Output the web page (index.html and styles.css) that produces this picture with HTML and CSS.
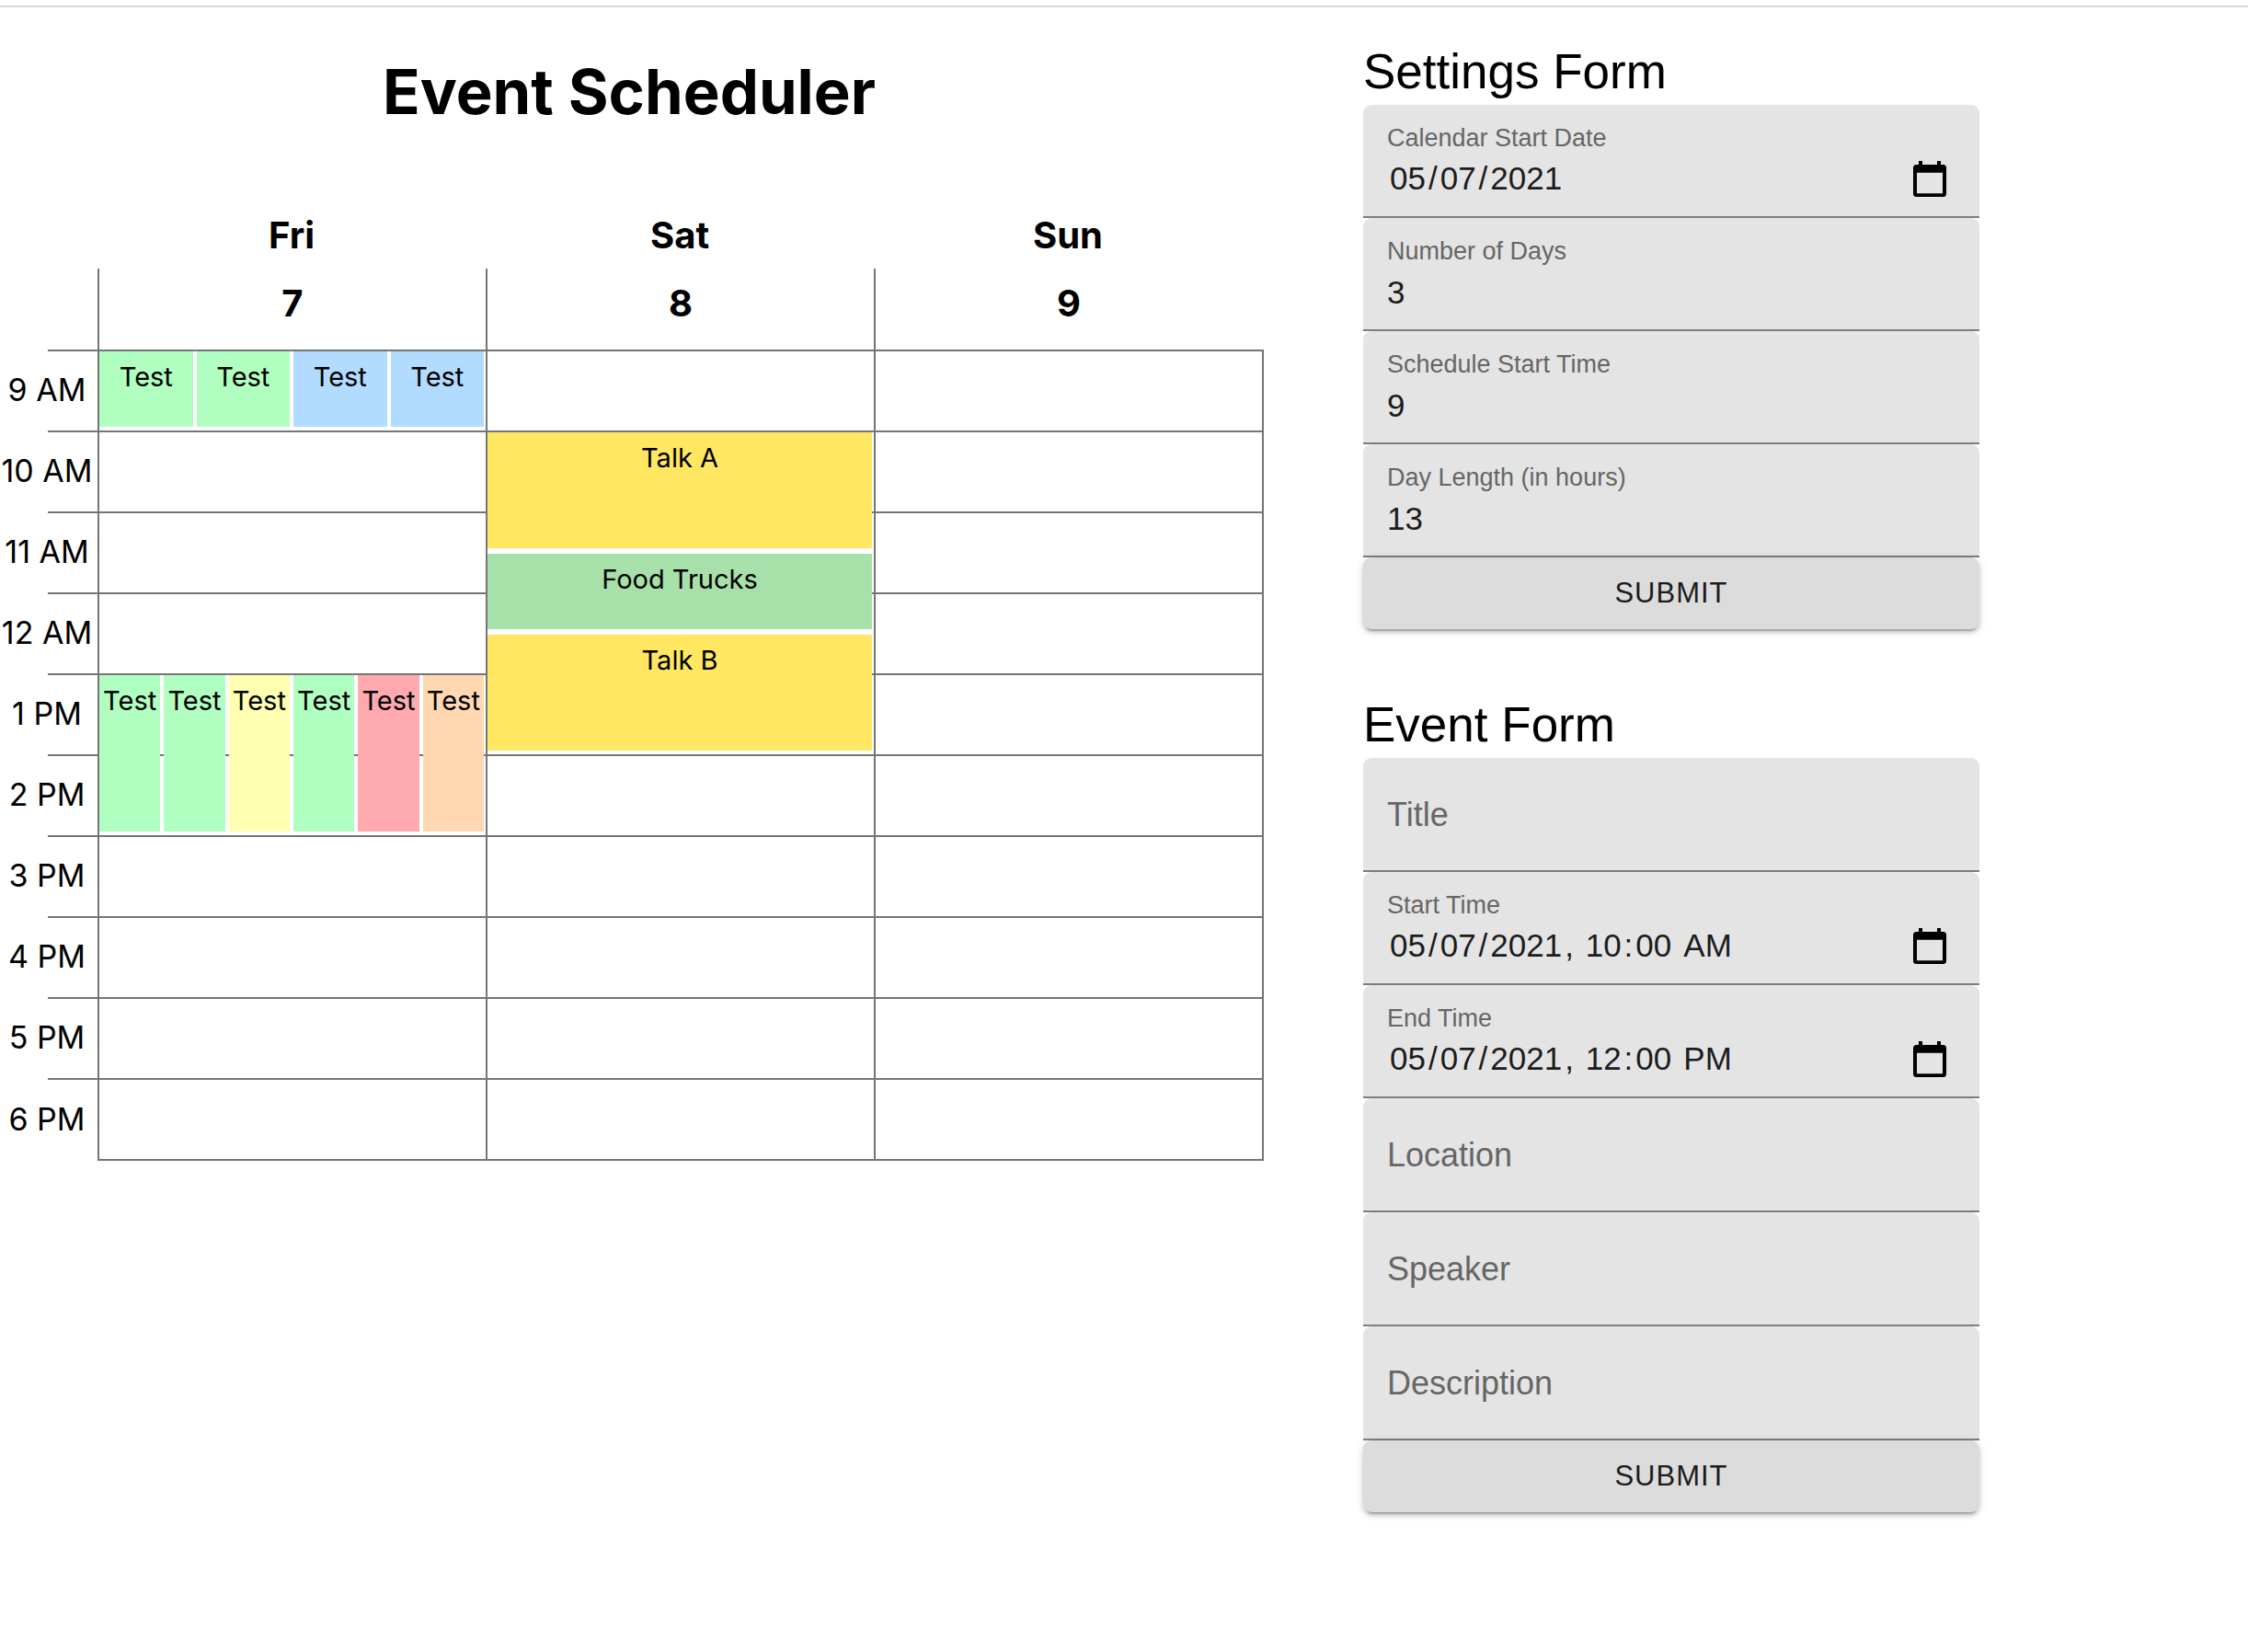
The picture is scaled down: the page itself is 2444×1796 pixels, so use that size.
FILE: index.html
```html
<!DOCTYPE html>
<html lang="en-US">
<head>
<meta charset="utf-8">
<meta name="viewport" content="width=device-width, initial-scale=1">
<title>Event Scheduler</title>
<link rel="stylesheet" href="styles.css">
</head>
<body>
<svg class="sprite" aria-hidden="true">
  <symbol id="calendar-icon" viewBox="0 0 36 39">
    <path fill-rule="evenodd" d="M6 0h4v4h16V0h4v4h2.500a3.500 3.500 0 0 1 3.500 3.500v28a3.500 3.500 0 0 1-3.500 3.500h-29A3.500 3.500 0 0 1 0 35.500v-28A3.500 3.500 0 0 1 3.500 4H6zM4 12.700v22.600h28V12.700z"/>
  </symbol>
</svg>
<main class="page">
  <section class="calendar">
    <h1 class="calendar__title">Event Scheduler</h1>
    <table class="schedule">
      <colgroup><col class="schedule__hours"><col><col><col></colgroup>
      <thead>
        <tr class="weekdays"><td></td><th scope="col">Fri</th><th scope="col">Sat</th><th scope="col">Sun</th></tr>
        <tr class="dates"><td></td><th scope="col">7</th><th scope="col">8</th><th scope="col">9</th></tr>
      </thead>
      <tbody>
        <tr>
          <th scope="row">9 AM</th>
          <td>
            <div class="events">
              <div class="event event--one event--mint">Test</div>
              <div class="event event--one event--mint">Test</div>
              <div class="event event--one event--blue">Test</div>
              <div class="event event--one event--blue">Test</div>
            </div>
          </td>
          <td></td><td></td>
        </tr>
        <tr>
          <th scope="row">10 AM</th><td></td>
          <td><div class="events"><div class="event event--long event--yellow">Talk A</div></div></td>
          <td></td>
        </tr>
        <tr>
          <th scope="row">11 AM</th><td></td>
          <td><div class="events events--half"><div class="event event--one event--green">Food Trucks</div></div></td>
          <td></td>
        </tr>
        <tr>
          <th scope="row">12 AM</th><td></td>
          <td><div class="events events--half"><div class="event event--long event--yellow">Talk B</div></div></td>
          <td></td>
        </tr>
        <tr>
          <th scope="row">1 PM</th>
          <td>
            <div class="events">
              <div class="event event--two event--mint">Test</div>
              <div class="event event--two event--mint">Test</div>
              <div class="event event--two event--lemon">Test</div>
              <div class="event event--two event--mint">Test</div>
              <div class="event event--two event--pink">Test</div>
              <div class="event event--two event--peach">Test</div>
            </div>
          </td>
          <td></td><td></td>
        </tr>
        <tr><th scope="row">2 PM</th><td></td><td></td><td></td></tr>
        <tr><th scope="row">3 PM</th><td></td><td></td><td></td></tr>
        <tr><th scope="row">4 PM</th><td></td><td></td><td></td></tr>
        <tr><th scope="row">5 PM</th><td></td><td></td><td></td></tr>
        <tr><th scope="row">6 PM</th><td></td><td></td><td></td></tr>
      </tbody>
    </table>
  </section>

  <div class="forms">
    <form class="form">
      <h2 class="form__title">Settings Form</h2>
      <div class="field">
        <label for="start-date">Calendar Start Date</label>
        <div class="field__row">
          <input type="date" id="start-date" value="2021-05-07">
          <svg class="field__icon" aria-hidden="true"><use href="#calendar-icon"/></svg>
        </div>
      </div>
      <div class="field field--number">
        <label for="day-count">Number of Days</label>
        <input type="number" id="day-count" value="3">
      </div>
      <div class="field field--number">
        <label for="start-hour">Schedule Start Time</label>
        <input type="number" id="start-hour" value="9">
      </div>
      <div class="field field--number">
        <label for="day-length">Day Length (in hours)</label>
        <input type="number" id="day-length" value="13">
      </div>
      <button class="submit" type="button">SUBMIT</button>
    </form>

    <form class="form">
      <h2 class="form__title">Event Form</h2>
      <div class="field field--text">
        <label for="title">Title</label>
        <input type="text" id="title">
      </div>
      <div class="field">
        <label for="start-time">Start Time</label>
        <div class="field__row">
          <input type="datetime-local" id="start-time" value="2021-05-07T10:00">
          <svg class="field__icon" aria-hidden="true"><use href="#calendar-icon"/></svg>
        </div>
      </div>
      <div class="field">
        <label for="end-time">End Time</label>
        <div class="field__row">
          <input type="datetime-local" id="end-time" value="2021-05-07T12:00">
          <svg class="field__icon" aria-hidden="true"><use href="#calendar-icon"/></svg>
        </div>
      </div>
      <div class="field field--text">
        <label for="location">Location</label>
        <input type="text" id="location">
      </div>
      <div class="field field--text">
        <label for="speaker">Speaker</label>
        <input type="text" id="speaker">
      </div>
      <div class="field field--text">
        <label for="description">Description</label>
        <input type="text" id="description">
      </div>
      <button class="submit" type="button">SUBMIT</button>
    </form>
  </div>
</main>
</body>
</html>
```
FILE: styles.css
```css
*, *::before, *::after { box-sizing: border-box; }

:root {
  --line: #757575;
  --hour: 88px;
}

body {
  margin: 0;
  padding: 6px 0 60px;
  background: #fff;
  color: #000;
  font-family: Inter, "Liberation Sans", sans-serif;
}

.sprite { display: none; }

.page {
  display: grid;
  grid-template-columns: 1374fr 670fr;
  column-gap: 108px;
  align-items: start;
  padding-right: 292px;
  padding-bottom: 20px;
  border-top: 2px solid #d8d8dc;
}

/* Calendar */
.calendar { padding-top: 50px; }

.calendar__title {
  margin: 0 0 74px;
  padding-right: 6px;
  font-size: 67px;
  font-weight: 700;
  line-height: 84px;
  text-align: center;
}

.schedule {
  width: calc(100% - 2px);
  table-layout: fixed;
  border-collapse: separate;
  border-spacing: 0;
}

.schedule__hours { width: 106px; }
.schedule th, .schedule td { padding: 0; }

.schedule thead th {
  font-size: 40px;
  font-weight: 700;
  line-height: 48px;
}

.schedule .weekdays th { height: 76px; padding-top: 4px; }

.schedule .dates th {
  height: var(--hour);
  padding-bottom: 12px;
  border-left: 2px solid var(--line);
}

.schedule tbody th {
  height: var(--hour);
  padding: 0 4px 2px 0;
  background: linear-gradient(var(--line), var(--line)) right top / 54px 2px no-repeat;
  font-size: 34px;
  font-weight: 400;
  white-space: nowrap;
}

.schedule tbody td {
  position: relative;
  border-top: 2px solid var(--line);
  border-left: 2px solid var(--line);
}

.schedule tbody td:last-child { box-shadow: 2px 0 0 var(--line); }
.schedule tbody tr:last-child td { border-bottom: 2px solid var(--line); }
.schedule tbody tr:last-child > * { height: 90px; }

/* Events lie over the hour cells */
.events {
  position: absolute;
  z-index: 1;
  top: 0;
  left: 0;
  right: 2px;
  display: flex;
  gap: 4px;
}

.events--half { top: 44px; }

.event {
  flex: 1 1 0;
  min-width: 0;
  padding-top: 9px;
  font-size: 29px;
  line-height: 38px;
  text-align: center;
  white-space: nowrap;
}

.event--one { height: 82px; }
.event--long { height: 126px; }
.event--two { height: 170px; }

.event--mint { background: #b1ffc0; }
.event--blue { background: #b1dcff; }
.event--yellow { background: #ffe762; }
.event--green { background: #a7e1a9; }
.event--lemon { background: #ffffb1; }
.event--pink { background: #ffa9b1; }
.event--peach { background: #ffd8b1; }

/* Forms */
.forms {
  display: flex;
  flex-direction: column;
  gap: 68px;
  padding-top: 34px;
  font-family: "Liberation Sans", Arial, sans-serif;
}

.form { display: flex; flex-direction: column; }

.form__title {
  margin: 0;
  font-size: 53px;
  font-weight: 400;
  line-height: 72px;
}

.field {
  display: flex;
  flex-direction: column;
  height: 123px;
  padding: 20px 26px 0;
  border-bottom: 2px solid #7d7d7d;
  border-radius: 9px 9px 0 0;
  background: #e4e4e4;
}

.field label {
  color: #666;
  font-size: 27px;
  line-height: 32px;
}

.field input {
  flex: 1;
  min-width: 0;
  width: 100%;
  margin: 0;
  padding: 0;
  border: 0;
  outline: 0;
  background: transparent;
  color: #1c1c1c;
  font: 35px/40px "Liberation Sans", Arial, sans-serif;
  appearance: none;
}

.field--number input { flex: none; height: 40px; margin-top: 9px; }
.field input::-webkit-inner-spin-button { display: none; }
.field input::-webkit-calendar-picker-indicator { display: none; }
.field input::-webkit-datetime-edit { padding: 0; }

.field input::-webkit-datetime-edit-month-field,
.field input::-webkit-datetime-edit-day-field,
.field input::-webkit-datetime-edit-year-field,
.field input::-webkit-datetime-edit-hour-field,
.field input::-webkit-datetime-edit-minute-field,
.field input::-webkit-datetime-edit-ampm-field { padding: 0 3px; }

.field__row {
  display: flex;
  align-items: center;
  margin-top: 7px;
  padding-right: 10px;
}

.field__icon { flex: none; width: 36px; height: 39px; }

/* An empty field shows its label at full size where the value goes */
.field--text {
  display: grid;
  align-items: center;
  height: 124px;
  padding: 2px 26px 0;
}

.field--text label,
.field--text input { grid-area: 1 / 1; }

.field--text label { font-size: 36px; line-height: 40px; }

.submit {
  position: relative;
  height: 78px;
  padding: 0 32px;
  border: 0;
  border-radius: 9px;
  background: #dcdcdc;
  box-shadow: 0 6px 2px -4px rgba(0, 0, 0, .2), 0 4px 4px rgba(0, 0, 0, .14), 0 2px 11px rgba(0, 0, 0, .12);
  color: #1c1c1c;
  font: 31px/40px "Liberation Sans", Arial, sans-serif;
  letter-spacing: 1px;
}
```
